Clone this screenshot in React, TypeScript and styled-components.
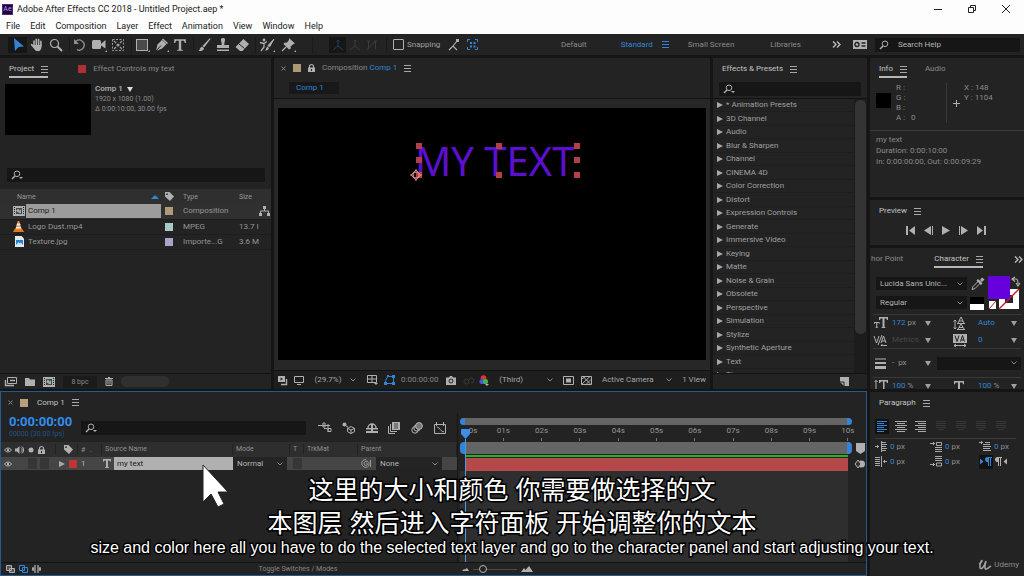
import React from "react";
import styled, { createGlobalStyle, css } from "styled-components";

const c = {
  bg: "#232323",
  gap: "#151515",
  field: "#161616",
  line: "#121212",
  text: "#b4b4b4",
  dim: "#8a8a8a",
  faint: "#484848",
  blue: "#3285d6",
  icon: "#b0b0b0",
};

const Global = createGlobalStyle`
  *, *::before, *::after { box-sizing: border-box; }
  body { margin: 0; background: ${c.gap}; }
  button, input, select { font: inherit; color: inherit; border: 0; padding: 0; margin: 0; background: none; border-radius: 0; }
  select { appearance: none; }
  p { margin: 0; }
`;

const App = styled.div`
  position: relative;
  display: flex;
  flex-direction: column;
  min-height: 100vh;
  overflow: hidden;
  background: ${c.gap};
  color: ${c.text};
  font: 8px/10px Roboto, "Liberation Sans", sans-serif;
`;

/* ---------- window chrome ---------- */
const TitleBar = styled.header`
  display: flex;
  align-items: center;
  height: 18px;
  padding: 0 14px 0 2px;
  gap: 4px;
  background: #fdfdfd;
  color: #222;
  font-size: 9px;
`;
const AppBadge = styled.span`
  width: 11px;
  height: 11px;
  background: #1f0040;
  border: 1px solid #4b2a78;
  color: #b79be8;
  font-size: 7px;
  line-height: 9px;
  text-align: center;
`;
const WindowButtons = styled.div`
  display: flex;
  gap: 26px;
  margin-left: auto;
`;
const MenuBar = styled.nav`
  display: flex;
  align-items: center;
  height: 16px;
  padding: 0 6px;
  gap: 10px;
  background: #fdfdfd;
  color: #222;
  font-size: 9px;
`;
const PlainButton = styled.button`
  display: inline-flex;
  align-items: center;
  justify-content: center;
  white-space: nowrap;
`;

const Svg = styled.svg`
  display: block;
  flex: none;
  overflow: visible;
`;

type IconProps = { w?: number; h?: number; color?: string; children: React.ReactNode };
const Icon = ({ w = 12, h = 12, color = c.icon, children }: IconProps) => (
  <Svg width={w} height={h} viewBox={`0 0 ${w} ${h}`} fill="none" stroke={color} color={color} aria-hidden="true">
    {children}
  </Svg>
);
const F = { fill: "currentColor", stroke: "none" };

/* ---------- toolbar ---------- */
const Toolbar = styled.div`
  display: flex;
  align-items: center;
  height: 21px;
  padding: 0 4px 0 8px;
  background: ${c.bg};
`;
const ToolGroup = styled.div`
  display: flex;
  width: 62px;
  border-right: 1px solid #1a1a1a;
`;
const Tool = styled.button<{ $on?: boolean; $w?: number }>`
  display: flex;
  align-items: center;
  justify-content: center;
  width: ${(p) => p.$w ?? 19}px;
  height: 16px;
  background: ${(p) => (p.$on ? "#161616" : "none")};
`;
const AxisTools = styled.div`
  display: flex;
  align-items: center;
  margin-left: 13px;
  padding: 0 5px 0 16px;
  border-left: 1px solid #1a1a1a;
  border-right: 1px solid #1a1a1a;
`;
const Snap = styled.label`
  display: flex;
  align-items: center;
  gap: 3px;
  margin: 0 8px 0 6px;
  color: #a0a0a0;
`;
const SnapBox = styled.input`
  appearance: none;
  width: 11px;
  height: 11px;
  border: 1px solid ${c.icon};
  border-radius: 1px;
`;
const SnapIcons = styled.div`
  display: flex;
  align-items: center;
  gap: 7px;
`;
const Workspaces = styled.div`
  display: flex;
  align-items: center;
  margin-left: auto;
  color: ${c.dim};
`;
const Space = styled.button<{ $gap: number; $on?: boolean }>`
  margin-right: ${(p) => p.$gap}px;
  color: ${(p) => (p.$on ? c.blue : c.dim)};
  white-space: nowrap;
`;
const SearchField = styled.label`
  display: flex;
  align-items: center;
  gap: 7px;
  height: 14px;
  padding: 0 4px;
  background: ${c.field};
  input {
    flex: 1;
    min-width: 0;
    outline: 0;
  }
  input::placeholder {
    color: ${c.text};
    opacity: 1;
  }
`;
const HelpSearch = styled(SearchField)`
  width: 145px;
  margin-left: 8px;
`;

/* ---------- panels ---------- */
const Body = styled.main`
  flex: 1;
  display: grid;
  grid-template-columns: minmax(0, 1fr) 154px;
  gap: 3px;
  padding-top: 3px;
`;
const LeftArea = styled.div`
  display: flex;
  flex-direction: column;
  gap: 2px;
  min-width: 0;
`;
const UpperRow = styled.div`
  flex: 1;
  display: grid;
  grid-template-columns: 271px minmax(0, 1fr) 154px;
  gap: 3px;
`;
const Panel = styled.section`
  display: flex;
  flex-direction: column;
  min-width: 0;
  background: ${c.bg};
`;
const Tabs = styled.div`
  display: flex;
  flex: none;
  align-items: flex-start;
  height: 22px;
  padding: 6px 6px 0 9px;
  white-space: nowrap;
  color: ${c.dim};
`;
const Tab = styled.button<{ $on?: boolean; $line?: boolean }>`
  display: flex;
  align-items: center;
  gap: 7px;
  height: 14px;
  padding-bottom: 2px;
  color: ${(p) => (p.$on ? "#c4c4c4" : c.dim)};
  border-bottom: 2px solid ${(p) => (p.$line ? "#b8b8b8" : "transparent")};
  white-space: nowrap;
`;
const Chip = styled.i<{ $c: string }>`
  display: block;
  flex: none;
  width: 8px;
  height: 8px;
  background: ${(p) => p.$c};
`;
const Blue = styled.span`
  color: ${c.blue};
`;
const MenuIcon = ({ color = "#a8a8a8" }: { color?: string }) => (
  <Icon w={7} h={7} color={color}>
    <path d="M0 .5h7M0 3.5h7M0 6.5h7" />
  </Icon>
);
const Lens = ({ drop = true }: { drop?: boolean }) => (
  <Icon w={12} h={10}>
    <circle cx="6" cy="3.8" r="2.8" />
    <path d="M4 6 1 9" strokeWidth="1.4" />
    {drop && <path d="M8 7h4l-2 2z" {...F} />}
  </Icon>
);
const Chevron = () => (
  <Icon w={6} h={4} color="#8a8a8a">
    <path d="M.5.5 3 3 5.5.5" />
  </Icon>
);
const More = () => (
  <Icon w={9} h={7} color="#c0c0c0">
    <path d="M1 .5l3 3-3 3M5 .5l3 3-3 3" strokeWidth="1.3" />
  </Icon>
);

/* Project */
const ProjectTabs = styled(Tabs)`
  gap: 30px;
`;
const Preview = styled.div`
  display: flex;
  gap: 4px;
  height: 88px;
  padding: 4px 5px 0;
  color: ${c.dim};
  font-size: 7px;
  strong {
    display: flex;
    align-items: center;
    gap: 4px;
    color: ${c.text};
    font-size: 8px;
    font-weight: 500;
  }
`;
const Thumb = styled.div`
  width: 86px;
  height: 51px;
  background: #000;
`;
const ProjectSearch = styled(SearchField)`
  margin: 0 6px 7px 7px;
`;
const FileTable = styled.table`
  width: 100%;
  table-layout: fixed;
  border-collapse: collapse;
  color: #969696;
  th {
    height: 15px;
    padding: 0 0 0 4px;
    background: #2f2f2f;
    font-size: 7px;
    font-weight: 400;
    text-align: left;
  }
  td {
    height: 15px;
    padding: 0;
    white-space: nowrap;
    border-bottom: 1px solid #1d1d1d;
  }
`;
const FileRow = styled.tr<{ $on?: boolean }>`
  background: ${(p) => (p.$on ? "#303030" : "none")};
`;
const FileName = styled.div<{ $on?: boolean }>`
  display: grid;
  grid-template-columns: 13px 1fr;
  align-items: center;
  height: 14px;
  span {
    padding: 2px;
    color: ${(p) => (p.$on ? "#1c1c1c" : "#969696")};
    background: ${(p) => (p.$on ? "#9c9c9c" : "none")};
  }
`;
const HeadCell = styled.div`
  display: flex;
  align-items: center;
  justify-content: space-between;
  padding-right: 2px;
`;
const ChipCell = styled.div`
  padding-left: 4px;
`;
const Indented = styled.div`
  padding-left: 4px;
`;
const FootBar = styled.footer`
  display: flex;
  align-items: center;
  gap: 8px;
  height: 16px;
  margin-top: auto;
  padding: 0 5px;
  border-top: 1px solid ${c.line};
  white-space: nowrap;
`;
const Depth = styled.button`
  width: 34px;
  height: 12px;
  background: #1b1b1b;
  font-size: 7px;
  color: ${c.dim};
`;
const ScrollPill = styled.div`
  width: 48px;
  height: 11px;
  border-radius: 6px;
  background: #303030;
`;

/* Composition */
const CompTabs = styled.div`
  display: flex;
  align-items: center;
  height: 20px;
  padding: 0 7px;
  white-space: nowrap;
  color: ${c.dim};
`;
const CompTitle = styled.span`
  margin: 0 7px;
`;
const TabLead = styled.div`
  display: flex;
  align-items: center;
  gap: 7px;
`;
const Breadcrumb = styled.div`
  height: 21px;
  padding: 4px 15px;
  border-bottom: 1px solid ${c.line};
  button {
    display: block;
    width: 50px;
    height: 12px;
    padding-left: 7px;
    text-align: left;
    background: #181818;
    color: ${c.blue};
  }
`;
const Stage = styled.div`
  flex: 1;
  display: flex;
  padding: 9px 4px 10px;
  background: #272727;
`;
const Canvas = styled.div`
  position: relative;
  flex: 1;
  background: #000;
`;
const TextLayer = styled.div`
  position: absolute;
  left: 32%;
  top: 15%;
  width: 160px;
  height: 30px;
  color: #5c10cf;
  font: 40px/30px "Noto Sans", sans-serif;
  white-space: nowrap;
  svg {
    position: absolute;
    inset: 0;
  }
`;
const ViewerBar = styled(FootBar)`
  height: 19px;
  gap: 0;
  padding: 0 4px;
  justify-content: space-between;
  background: #1e1e1e;
  color: #a5a5a5;
`;
const Faded = styled.span`
  color: #858585;
`;
const SelectBox = styled.label<{ $w?: number; $bg?: string }>`
  display: grid;
  align-items: center;
  width: ${(p) => (p.$w ? `${p.$w}px` : "100%")};
  height: 13px;
  background: ${(p) => p.$bg ?? "none"};
  select,
  svg {
    grid-area: 1 / 1;
  }
  select {
    width: 100%;
    height: 100%;
    padding-left: 4px;
  }
  svg {
    justify-self: end;
    margin-right: 4px;
    pointer-events: none;
  }
`;
const Picker = ({ label, value, ...rest }: { label: string; value: string; $w?: number; $bg?: string }) => (
  <SelectBox {...rest}>
    <select aria-label={label} defaultValue={value}>
      <option>{value}</option>
    </select>
    <Chevron />
  </SelectBox>
);

/* Effects */
const EffectSearch = styled(SearchField)`
  margin: 2px 6px;
`;
const EffectBody = styled.div`
  display: flex;
  height: 275px;
  overflow: hidden;
  border-top: 1px solid ${c.line};
`;
const EffectList = styled.ul`
  flex: 1;
  margin: 0;
  padding: 0;
  list-style: none;
  color: #a0a0a0;
`;
const EffectItem = styled.li`
  display: flex;
  align-items: center;
  gap: 3px;
  height: 13px;
  padding-left: 4px;
  border-bottom: 1px solid #1e1e1e;
  white-space: nowrap;
  &:nth-child(even) {
    height: 14px;
  }
`;
const ScrollTrack = styled.div`
  width: 13px;
  padding: 1px 1px 0;
  background: #1c1c1c;
`;
const ScrollThumb = styled.div`
  height: 234px;
  border-radius: 5px;
  background: #343434;
`;
const NewPreset = styled.div`
  margin-left: auto;
  padding-right: 13px;
`;

/* Right column */
const RightArea = styled.aside`
  display: flex;
  flex-direction: column;
  gap: 3px;
  min-width: 0;
`;
const InfoTabs = styled(Tabs)`
  gap: 18px;
`;
const InfoGrid = styled.div`
  display: grid;
  grid-template-columns: 20px 51px 17px 1fr;
  height: 51px;
  padding: 3px 6px 0;
  color: ${c.dim};
  border-bottom: 1px solid #3a3a3a;
`;
const Swatch = styled.div`
  width: 15px;
  height: 15px;
  margin-top: 10px;
  background: #000;
`;
const Channels = styled.div`
  height: 40px;
  border-right: 1px solid #3a3a3a;
  white-space: pre;
`;
const Plus = styled.div`
  padding: 17px 0 0 6px;
`;
const InfoText = styled.div`
  padding: 3px 6px 0;
  line-height: 11px;
  color: ${c.dim};
  white-space: nowrap;
`;
const InfoPanel = styled(Panel)`
  height: 139px;
`;
const PreviewPanel = styled(Panel)`
  height: 45px;
`;
const Transport = styled.div`
  display: flex;
  justify-content: center;
  gap: 9px;
  padding: 4px 2px 0 0;
`;
const CharPanel = styled(Panel)`
  height: 141px;
  overflow: hidden;
`;
const CharTabs = styled(Tabs)`
  justify-content: space-between;
  padding-left: 1px;
  padding-right: 1px;
`;
const CharTop = styled.div`
  display: grid;
  flex: none;
  grid-template-columns: 91px 1fr;
  gap: 3px;
  height: 44px;
  padding: 7px 3px 0 6px;
`;
const FontPickers = styled.div`
  display: grid;
  grid-auto-rows: 13px;
  gap: 6px;
`;
const CharRow = styled.div<{ $h?: number; $line?: boolean }>`
  display: grid;
  grid-template-columns: 18px 33px 28px 25px 33px 10px;
  flex: none;
  align-items: center;
  height: ${(p) => p.$h ?? 17}px;
  margin: 0 3px;
  padding-left: 1px;
  white-space: nowrap;
  border-top: 1px solid ${(p) => (p.$line ? "#383838" : "transparent")};
`;
const StrokeRow = styled(CharRow)`
  grid-template-columns: 18px 33px 12px 1fr;
`;
const Val = styled.span<{ $off?: boolean }>`
  color: ${(p) => (p.$off ? c.faint : "#909090")};
`;
const ParaPanel = styled(Panel)`
  flex: 1;
`;
const AlignRow = styled.div`
  display: flex;
  align-items: center;
  gap: 5px;
  height: 25px;
  margin: 0 8px 0 5px;
  border-bottom: 1px solid #3a3a3a;
`;
const AlignButton = styled.button<{ $on?: boolean }>`
  display: flex;
  align-items: center;
  justify-content: center;
  width: 14px;
  height: 15px;
  background: ${(p) => (p.$on ? "#121212" : "none")};
`;
const Justify = styled.div`
  display: flex;
  gap: 6px;
  padding-left: 2px;
`;
const IndentGrid = styled.div`
  display: grid;
  grid-template-columns: 15px 40px 15px 34px 15px 1fr;
  grid-auto-rows: 15px;
  align-items: center;
  padding: 0 4px 0 5px;
`;
const DirButton = styled.button<{ $on?: boolean }>`
  display: grid;
  place-items: center;
  width: 14px;
  height: 14px;
  background: ${(p) => (p.$on ? "#121212" : "none")};
`;
const Brand = styled.div`
  display: flex;
  align-items: center;
  justify-content: flex-end;
  gap: 3px;
  margin-top: auto;
  padding: 0 5px 6px 0;
  color: #8c8c8c;
`;

/* Timeline */
const Timeline = styled(Panel)`
  position: relative;
  height: 185px;
  border: 1px solid #27588f;
`;
const TimeTabs = styled.div`
  display: flex;
  align-items: center;
  height: 21px;
  padding: 0 7px;
`;
const TimeTitle = styled.span`
  margin-left: 2px;
  color: #c4c4c4;
`;
const TimeBody = styled.div`
  flex: 1;
  display: flex;
`;
const LayerSide = styled.div`
  width: 456px;
  display: flex;
  flex-direction: column;
`;
const TimeTools = styled.div`
  display: flex;
  align-items: center;
  height: 29px;
  padding: 0 10px 0 8px;
`;
const Timecode = styled.div`
  width: 72px;
  padding-bottom: 2px;
  color: #2f8eee;
  font-size: 13px;
  font-weight: 700;
  line-height: 14px;
  small {
    display: block;
    color: #1f5286;
    font-size: 7px;
    font-weight: 400;
    line-height: 10px;
  }
`;
const LayerSearch = styled(SearchField)`
  width: 225px;
  margin-right: 12px;
`;
const TimeIcons = styled.div`
  flex: 1;
  display: flex;
  align-items: center;
  justify-content: space-between;
`;
const layerGrid = css`
  display: grid;
  grid-template-columns: 55px 22px 24px 131px 57px 14px 54px 1fr;
  align-items: center;
`;
const LayerHead = styled.div`
  ${layerGrid}
  height: 15px;
  background: #2e2e2e;
  color: #8e8e8e;
  font-size: 7px;
  > * {
    height: 11px;
    padding-left: 3px;
    border-right: 1px solid #222;
    white-space: nowrap;
  }
`;
const LayerRow = styled.div`
  ${layerGrid}
  height: 13px;
  background: #454545;
`;
const Cells = styled.div<{ $gap?: number; $center?: boolean }>`
  display: flex;
  align-items: center;
  justify-content: ${(p) => (p.$center ? "center" : "flex-start")};
  gap: ${(p) => p.$gap ?? 3}px;
  padding-left: 3px;
`;
const DarkCell = styled.i`
  width: 9px;
  height: 11px;
  background: #363636;
`;
const SpeakerGap = styled.i`
  width: 10px;
`;
const LayerName = styled.div`
  display: grid;
  grid-template-columns: 12px 1fr;
  align-items: center;
  span {
    height: 13px;
    padding-left: 3px;
    line-height: 13px;
    background: #b0b0b0;
    color: #1c1c1c;
  }
`;
const TrackSide = styled.div`
  flex: 1;
  display: flex;
  flex-direction: column;
`;
const TrackBody = styled.div`
  flex: 1;
  display: grid;
  grid-template-columns: 1fr 18px;
  padding-left: 7px;
  border-left: 1px solid #161616;
`;
const Track = styled.div`
  position: relative;
  display: flex;
  flex-direction: column;
`;
const RangeBar = styled.div<{ $h: number; $top: number }>`
  height: ${(p) => p.$h}px;
  margin: ${(p) => p.$top}px -4px 0 -5px;
  background: #656565;
  border: solid #3285d6;
  border-width: 0 5px;
  border-radius: 4px;
`;
const Ruler = styled.div`
  display: grid;
  grid-template-columns: repeat(11, minmax(0, 1fr));
  height: 16px;
  margin: 0 -19px;
  color: #969696;
  line-height: 12px;
  text-align: center;
  span::after {
    content: "";
    display: block;
    width: 1px;
    height: 3px;
    margin: 1px auto 0;
    background: #777;
  }
  span:first-child {
    padding-left: 16px;
  }
  span:first-child::after {
    background: none;
  }
`;
const Cached = styled.div`
  height: 2px;
  margin: 1px 0;
  background: #24b324;
`;
const LayerBar = styled.div`
  height: 13px;
  background: #b5484b;
`;
const TrackFill = styled.div`
  flex: 1;
  margin-left: -5px;
  background: #2e2e2e;
`;
const Playhead = styled.div`
  position: absolute;
  left: -5px;
  top: 16px;
  bottom: 0;
  width: 11px;
  display: flex;
  flex-direction: column;
  align-items: center;
  i {
    flex: 1;
    width: 1px;
    background: #4d9be6;
  }
`;
const TrackMarks = styled.div`
  display: flex;
  flex-direction: column;
  align-items: flex-end;
  gap: 5px;
  padding: 30px 1px 0 0;
`;
const TimeFoot = styled(FootBar)`
  height: 13px;
  gap: 4px;
`;
const ToggleModes = styled.button`
  width: 136px;
  margin-left: auto;
  margin-right: 86px;
  color: #858585;
  font-size: 7px;
`;
const Zoom = styled.input`
  appearance: none;
  width: 44px;
  height: 8px;
  &::-webkit-slider-runnable-track {
    height: 1px;
    background: #4c4c4c;
  }
  &::-webkit-slider-thumb {
    appearance: none;
    width: 8px;
    height: 8px;
    margin-top: -4px;
    border: 1px solid #b4b4b4;
    border-radius: 50%;
    background: #232323;
  }
`;

/* Overlays */
const Pointer = styled.div`
  position: absolute;
  left: 201px;
  top: 72px;
`;
const Subtitles = styled.div`
  position: absolute;
  left: 0;
  right: 0;
  bottom: 20px;
  color: #fff;
  text-align: center;
  white-space: nowrap;
  pointer-events: none;
  paint-order: stroke fill;
  -webkit-text-stroke: 3px #000;
`;
const Chinese = styled.p`
  font: 25px/33px "Liberation Sans", "Noto Sans CJK SC", sans-serif;
`;
const English = styled.p`
  font: 16px/16px "Liberation Sans", sans-serif;
`;

/* ---------- shared drawings ---------- */
const Tri = ({ color = "#a8a8a8" }: { color?: string }) => (
  <Icon w={6} h={6} color={color}>
    <path d="M0 0l6 3-6 3z" {...F} />
  </Icon>
);
const Down = ({ color = "#a0a0a0" }: { color?: string }) => (
  <Icon w={6} h={5} color={color}>
    <path d="M0 0h6L3 5z" {...F} />
  </Icon>
);
const Cross = () => (
  <Icon w={5} h={5} color="#888">
    <path d="M.5.5l4 4M4.5.5l-4 4" />
  </Icon>
);
const Tag = () => (
  <Icon w={9} h={9}>
    <path d="M0 0h4.5L9 4.5 5 9 0 4.5zM2 1.2a.9.9 0 1 0 .1 1.8A.9.9 0 0 0 2 1.2z" fillRule="evenodd" {...F} />
  </Icon>
);
const Eye = () => (
  <Icon w={8} h={6}>
    <path d="M.5 3C2.3.4 5.7.4 7.5 3 5.7 5.6 2.3 5.6.5 3z" />
    <circle cx="4" cy="3" r="1.2" {...F} />
  </Icon>
);
const Lock = () => (
  <Icon w={7} h={8}>
    <path d="M0 3.5h7V8H0z" {...F} />
    <path d="M1.5 4V2.5a2 2 0 0 1 4 0V4" strokeWidth="1.2" />
    <path d="M3.5 5v2" stroke="#222" />
  </Icon>
);
const CompIcon = () => (
  <Icon w={12} h={10}>
    <path d="M0 0h12v10H0z" {...F} />
    <path d="M1.5 1v8M10.5 1v8" stroke="#222" strokeDasharray="1 1" />
    <path d="M3 2h6v6H3z" fill="#3c4a55" stroke="none" />
    <circle cx="5" cy="4.4" r="1.5" fill="#c9b070" stroke="none" />
    <path d="M5 7l3-4v4z" fill="#8fb6cc" stroke="none" />
  </Icon>
);
const Cone = () => (
  <Icon w={11} h={11}>
    <path d="M2 7.5h7l2 3.5H0z" fill="#e07a1c" stroke="none" />
    <path d="M4.7 0h1.6l2.2 8.2c-1.4.8-4.6.8-6 0z" fill="#ea8a2c" stroke="none" />
    <path d="M4 2.6h3l.5 1.8h-4zM3.1 5.8h4.8l.4 1.6H2.7z" fill="#eee" stroke="none" />
  </Icon>
);
const Jpg = () => (
  <Icon w={11} h={11}>
    <path d="M2 0h6.5L11 2.5V11H2z" fill="#dfe9f2" stroke="none" />
    <path d="M3 4h7v5H3z" fill="#2b7fc4" stroke="none" />
    <path d="M3 9l2.5-3L7 7.6l1-1L10 9z" fill="#cfe6f7" stroke="none" />
  </Icon>
);
const linePaths = {
  l: "M1 .5h10M1 2.5h7M1 4.5h10M1 6.5h7M1 8.5h10M1 10.5h7",
  c: "M0 .5h12M2 2.5h8M0 4.5h12M2 6.5h8M0 8.5h12M2 10.5h8",
  r: "M1 .5h11M4 2.5h8M1 4.5h11M4 6.5h8M1 8.5h11M4 10.5h8",
  j: "M1 .5h10M1 2.5h10M1 4.5h10M1 6.5h10M3 8.5h6",
};
const Lines = ({ kind, color }: { kind: keyof typeof linePaths; color: string }) => (
  <Icon w={12} h={11} color={color}>
    <path d={linePaths[kind]} />
  </Icon>
);
const BigT = ({ size = 12 }: { size?: number }) => (
  <Svg width={size} height={size} viewBox="0 0 12 12" color={c.icon} aria-hidden="true">
    <path d="M1 1h10v3.2h-.9L9.4 2.4H7v7.4l1.5.5v.7h-5v-.7L5 9.8V2.4H2.6l-.7 1.8H1z" {...F} />
  </Svg>
);
const indentPaths = [
  "M0 5.5h4M2.5 4v3M6.5 0v11M7 1.5h4M7 3.5h5M7 5.5h4M7 7.5h5M7 9.5h4",
  "M0 2.5h5M3.5 1v3M6.5 1.5h5v3h-5zM5 6.5h7M5 8.5h7M5 10.5h7",
  "M0 1.5h4M2.5 0v3M6 1.5h5M4 3.5h7M4 5.5h8M4 7.5h7M4 9.5h8",
  "M0 1.5h5M0 3.5h5M0 5.5h5M0 7.5h5M0 9.5h5M6.5 0v11M8 5.5h4M9.5 4v3",
  "M5 .5h7M5 2.5h7M5 4.5h7M0 8.5h5M3.5 7v3M6.5 7h5v3h-5z",
];
const Indent = ({ v }: { v: number }) => (
  <Icon w={12} h={11} color="#a8a8a8">
    <path d={indentPaths[v]} />
  </Icon>
);

const effects = [
  "* Animation Presets", "3D Channel", "Audio", "Blur & Sharpen", "Channel", "CINEMA 4D", "Color Correction",
  "Distort", "Expression Controls", "Generate", "Immersive Video", "Keying", "Matte", "Noise & Grain", "Obsolete",
  "Perspective", "Simulation", "Stylize", "Synthetic Aperture", "Text", "Time",
];
const menus = ["File", "Edit", "Composition", "Layer", "Effect", "Animation", "View", "Window", "Help"];
const files = [
  { name: "Comp 1", type: "Composition", size: "", chip: "#b09a78", icon: <CompIcon />, on: true },
  { name: "Logo Dust.mp4", type: "MPEG", size: "13.7 I", chip: "#a9c9c4", icon: <Cone /> },
  { name: "Texture.jpg", type: "Importe...G", size: "3.6 M", chip: "#aaa3cc", icon: <Jpg /> },
];
const seconds = ["0s", "01s", "02s", "03s", "04s", "05s", "06s", "07s", "08s", "09s", "10s"];

const corner = <path d="M16 12v2h-2z" {...F} />;

function Tools() {
  return (
    <>
      <ToolGroup>
        <Tool $on aria-label="Selection">
          <Icon w={16} h={14} color={c.blue}><path d="M4 0l10 8.4-5.4.6L5 13z" {...F} /></Icon>
        </Tool>
        <Tool aria-label="Hand">
          <Icon w={16} h={14}>
            <path d="M5 8V3M7.3 7V1.2M9.6 7V1.6M11.9 8V3.4M2.6 6.6L5.6 10" strokeWidth="1.6" strokeLinecap="round" />
            <path d="M4.2 7h8.5l-.6 4-1.6 2H7L4.2 9.8z" {...F} />
          </Icon>
        </Tool>
        <Tool aria-label="Zoom">
          <Icon w={16} h={14}><circle cx="6.5" cy="5.5" r="4" strokeWidth="1.2" /><path d="M9.5 8.5l4.5 4.5" strokeWidth="2" /></Icon>
        </Tool>
      </ToolGroup>
      <ToolGroup>
        <Tool aria-label="Rotation">
          <Icon w={16} h={14} color="#909090"><path d="M4 3.2A5 5 0 1 1 5 11.6" strokeWidth="1.4" /><path d="M2 1v5h5z" {...F} /></Icon>
        </Tool>
        <Tool aria-label="Camera">
          <Icon w={16} h={14}><rect x="1" y="2" width="9" height="9" rx="1.5" {...F} /><path d="M10 6l4.5-4v8.5L10 7.5z" {...F} />{corner}</Icon>
        </Tool>
        <Tool aria-label="Pan Behind">
          <Icon w={16} h={14} color="#9a9a9a">
            <rect x="2.5" y="1.5" width="11" height="11" strokeDasharray="2 1.5" />
            <circle cx="8" cy="7" r="1.6" {...F} /><path d="M4 3l2 2M12 3l-2 2M4 11l2-2M12 11l-2-2" strokeWidth="1.3" />
          </Icon>
        </Tool>
      </ToolGroup>
      <ToolGroup>
        <Tool aria-label="Rectangle">
          <Icon w={16} h={14}><rect x="2.5" y="1.5" width="11" height="11" fill="#4a4a4a" />{corner}</Icon>
        </Tool>
        <Tool aria-label="Pen">
          <Icon w={16} h={14}><path d="M3 13l1.5-6.5L9 2l4.5 4-4.4 4.6z" {...F} /><path d="M9.5 1l5 4.5" strokeWidth="1.6" /><path d="M3 13l5-5.5" stroke="#232323" />{corner}</Icon>
        </Tool>
        <Tool aria-label="Type"><BigT size={14} /></Tool>
      </ToolGroup>
      <ToolGroup>
        <Tool aria-label="Brush">
          <Icon w={16} h={14}><path d="M14 0L6.5 8l1.6 1.6L14.5 1z" {...F} /><path d="M6 8.4l2 2c-.6 2.2-2.6 2.8-5.5 2.6C4 12 3.8 9.4 6 8.4z" {...F} /></Icon>
        </Tool>
        <Tool aria-label="Clone Stamp">
          <Icon w={16} h={14}><path d="M8 0c2 0 2.6 1.5 1.8 3L9.2 7H14v3H2V7h4.8L6.2 3C5.4 1.5 6 0 8 0zM2 11.5h12V13H2z" {...F} /></Icon>
        </Tool>
        <Tool aria-label="Eraser">
          <Icon w={16} h={14}><path d="M9.5 1L15 6l-6.5 7H6L1.5 9z" {...F} /><path d="M4.5 5.5l6 5" stroke="#232323" /></Icon>
        </Tool>
      </ToolGroup>
      <Tool $w={21} aria-label="Roto Brush">
        <Icon w={16} h={14}><path d="M15 1L9 7.5 10.5 9z" {...F} stroke={c.icon} /><path d="M8.5 8.5L10 10c-.6 2-2 2.5-4 2.5 1.2-.8.8-3 2.5-4z" {...F} /><circle cx="5" cy="2" r="1.4" {...F} /><path d="M1 4.5l4 1 3-2M5 5v4l-3 4" strokeWidth="1.3" />{corner}</Icon>
      </Tool>
      <Tool $w={22} aria-label="Puppet Pin">
        <Icon w={16} h={14}><path d="M9 0l6 5.5-1.5.5-3 2.5.3 2L9 11.5 3.5 6l1.2-1.4 2 .2L9 2z" {...F} /><path d="M6 9l-4 4" strokeWidth="1.3" />{corner}</Icon>
      </Tool>
      <AxisTools>
        <Tool $w={17} $on aria-label="Local Axis"><Icon w={12} h={12} color="#25405c"><path d="M6 1v6l-5 4M6 7l5 4M4.5 2.5L6 1l1.5 1.5" /></Icon></Tool>
        <Tool $w={17} aria-label="World Axis"><Icon w={12} h={12} color="#3c3c3c"><path d="M6 1v6l-5 4M6 7l5 4M4.5 2.5L6 1l1.5 1.5" /></Icon></Tool>
        <Tool $w={18} aria-label="View Axis"><Icon w={12} h={12} color="#3c3c3c"><path d="M2.5 2v7l7-7v8M1 2h3M8 2h3M2.5 9l-1 2" /></Icon></Tool>
      </AxisTools>
    </>
  );
}

function ProjectPanel() {
  return (
    <Panel>
      <ProjectTabs>
        <Tab $on $line>Project <MenuIcon /></Tab>
        <Tab><Chip $c="#b03038" />Effect Controls my text</Tab>
      </ProjectTabs>
      <Preview>
        <Thumb />
        <div>
          <strong>Comp 1 <Down color="#ddd" /></strong>
          <div>1920 x 1080 (1.00)</div>
          <div>Δ 0:00:10:00, 30.00 fps</div>
        </div>
      </Preview>
      <ProjectSearch><Lens /><input aria-label="Search project" /></ProjectSearch>
      <FileTable>
        <colgroup><col width="13" /><col width="148" /><col width="18" /><col width="56" /><col width="24" /><col /></colgroup>
        <thead>
          <tr>
            <th />
            <th><HeadCell>Name<Icon w={8} h={4} color={c.blue}><path d="M0 4l4-4 4 4z" {...F} /></Icon></HeadCell></th>
            <th><Tag /></th><th>Type</th><th>Size</th><th />
          </tr>
        </thead>
        <tbody>
          {files.map((f) => (
            <FileRow key={f.name} $on={f.on}>
              <td />
              <td><FileName $on={f.on}>{f.icon}<span>{f.name}</span></FileName></td>
              <td><ChipCell><Chip $c={f.chip} /></ChipCell></td>
              <td><Indented>{f.type}</Indented></td>
              <td><Indented>{f.size}</Indented></td>
              <td>{f.on && <Icon w={11} h={10}><path d="M4 0h3v3H4zM0 7h3v3H0zM8 7h3v3H8z" {...F} /><path d="M5.5 3v2M1.5 7V5h8v2" /></Icon>}</td>
            </FileRow>
          ))}
        </tbody>
      </FileTable>
      <FootBar>
        <Icon w={12} h={9}><path d="M2.5.5h9v6h-9z" /><path d="M.5 3v5.5H9M5 3.5h5" strokeWidth="1.4" /></Icon>
        <Icon w={10} h={8}><path d="M0 0h4l1 1.5h5V8H0z" {...F} /></Icon>
        <CompIcon />
        <Depth>8 bpc</Depth>
        <Icon w={8} h={9}><path d="M0 1.5h8M3 .5h2M1 3h6v5.5H1zM3 3.5v4M5 3.5v4" /></Icon>
        <ScrollPill />
      </FootBar>
    </Panel>
  );
}

function CompositionPanel() {
  return (
    <Panel>
      <CompTabs>
        <TabLead><Cross /><Chip $c="#ab9a74" /><Lock /></TabLead>
        <CompTitle>Composition <Blue>Comp 1</Blue></CompTitle>
        <MenuIcon />
      </CompTabs>
      <Breadcrumb><button>Comp 1</button></Breadcrumb>
      <Stage>
        <Canvas>
          <TextLayer>
            MY TEXT
            <Svg width="160" height="30" viewBox="0 0 160 30">
              {[4, 84, 162].flatMap((x) =>
                [0, 14, 29].filter((y) => x !== 84 || y !== 14).map((y) => (
                  <rect key={`${x}-${y}`} x={x - 3} y={y - 3} width="6" height="6" fill="#b14145" />
                ))
              )}
              <circle cx="1" cy="29" r="3" fill="none" stroke="#d08080" />
              <path d="M1 23v4M1 31v4M-5 29h4M3 29h4M-4 29l5-5 5 5-5 5z" fill="none" stroke="#d08080" />
            </Svg>
          </TextLayer>
        </Canvas>
      </Stage>
      <ViewerBar>
        <Icon w={10} h={9}><path d="M0 0h7v6H0z" {...F} /><path d="M8.5 3v5.5H3" strokeWidth="1.4" /><path d="M2.5 1.5v3L5 3z" fill="#222" stroke="none" /></Icon>
        <Icon w={10} h={9}><path d="M.5.5h9v6h-9zM3 8.5h4" /></Icon>
        <Picker label="Magnification" value="(29.7%)" $w={50} />
        <Icon w={11} h={10}><path d="M.5.5h9v7h-9zM5 0v8M0 4h10" /><path d="M7 8h4l-2 2z" {...F} /></Icon>
        <Icon w={11} h={10} color={c.blue}><path d="M1.5 8.5c0-4 1-6 3-7h5v7z" /><path d="M0 7h3v3H0zM8 7h3v3H8zM8 0h3v3H8zM3 0h2v2H3z" {...F} /></Icon>
        <PlainButton><Faded>0:00:00:00</Faded></PlainButton>
        <Icon w={12} h={9}><path d="M1 1.5h3L5 0h2l1 1.5h3V9H1z" {...F} /><circle cx="6" cy="5" r="2" stroke="#222" /></Icon>
        <Icon w={10} h={9} color="#3a3a3a"><circle cx="3.5" cy="5.5" r="2.5" /><path d="M6 4a2.5 2.5 0 1 1 2 3" /></Icon>
        <Icon w={10} h={11}><circle cx="4.5" cy="3" r="2.8" fill="#d33" stroke="none" /><circle cx="3" cy="6.5" r="2.6" fill="#3a5be0" stroke="none" /><circle cx="6.5" cy="6.5" r="2.6" fill="#4ab04a" stroke="none" /><path d="M6 9h4l-2 2z" {...F} /></Icon>
        <Picker label="Resolution" value="(Third)" $w={62} />
        <Icon w={11} h={9}><path d="M.5.5h10v8H.5z" /><path d="M3 2.5h5v4H3z" {...F} /></Icon>
        <Icon w={11} h={9}><path d="M.5.5h10v8H.5zM1 3l3-2.5M1 8L9 .5M5 8.5l5-5M2 .5l8 8" /></Icon>
        <Picker label="View" value="Active Camera" $w={78} />
        <PlainButton>1 View</PlainButton>
      </ViewerBar>
    </Panel>
  );
}

function EffectsPanel() {
  return (
    <Panel>
      <Tabs><Tab $on>Effects &amp; Presets <MenuIcon /></Tab></Tabs>
      <EffectSearch><Lens /><input aria-label="Search effects" /></EffectSearch>
      <EffectBody>
        <EffectList>
          {effects.map((e) => <EffectItem key={e}><Tri />{e}</EffectItem>)}
        </EffectList>
        <ScrollTrack><ScrollThumb /></ScrollTrack>
      </EffectBody>
      <FootBar>
        <NewPreset><Icon w={9} h={9}><path d="M0 0h9v9H4L0 5z" {...F} /><path d="M0 5h4v4" stroke="#222" /></Icon></NewPreset>
      </FootBar>
    </Panel>
  );
}

function RightColumn() {
  return (
    <RightArea>
      <InfoPanel>
        <InfoTabs><Tab $on $line>Info <MenuIcon /></Tab><Tab>Audio</Tab></InfoTabs>
        <InfoGrid>
          <Swatch />
          <Channels>{"R :\nG :\nB :\nA :   0"}</Channels>
          <Plus><Icon w={7} h={7}><path d="M3.5 0v7M0 3.5h7" /></Icon></Plus>
          <div>X : 148<br />Y : 1104</div>
        </InfoGrid>
        <InfoText>my text<br />Duration: 0:00:10:00<br />In: 0:00:00:00, Out: 0:00:09:29</InfoText>
      </InfoPanel>
      <PreviewPanel>
        <Tabs><Tab $on>Preview <MenuIcon /></Tab></Tabs>
        <Transport>
          <PlainButton aria-label="First frame"><Icon w={9} h={9}><path d="M1 0v9" strokeWidth="2" /><path d="M9 0v9L3 4.5z" {...F} /></Icon></PlainButton>
          <PlainButton aria-label="Previous frame"><Icon w={9} h={9}><path d="M8.5 0v9" /><path d="M7 0v9L0 4.5z" {...F} /></Icon></PlainButton>
          <PlainButton aria-label="Play"><Icon w={8} h={9}><path d="M0 0l8 4.5L0 9z" {...F} /></Icon></PlainButton>
          <PlainButton aria-label="Next frame"><Icon w={9} h={9}><path d="M.5 0v9" /><path d="M2 0v9l7-4.5z" {...F} /></Icon></PlainButton>
          <PlainButton aria-label="Last frame"><Icon w={9} h={9}><path d="M8 0v9" strokeWidth="2" /><path d="M0 0v9l6-4.5z" {...F} /></Icon></PlainButton>
        </Transport>
      </PreviewPanel>
      <CharPanel>
        <CharTabs>
          <Tab>hor Point</Tab>
          <Tab $on $line>Character <MenuIcon /></Tab>
          <Tab aria-label="More tabs"><More /></Tab>
        </CharTabs>
        <CharTop>
          <FontPickers>
            <Picker label="Font family" value="Lucida Sans Unic..." $bg={c.field} />
            <Picker label="Font style" value="Regular" $bg={c.field} />
          </FontPickers>
          <Icon w={52} h={34}>
            <path d="M2 12.5l1-3 6-6 2 2-6 6z" /><path d="M8 2l4.5 4.5L11 8 6.5 3.5zM10 3l2-2.5 2.5 2L12 5z" {...F} />
            <path d="M0 20h14v7H0z" fill="#000" stroke="none" /><path d="M0 27h14v6H0z" fill="#fff" stroke="none" />
            <path d="M29 12h20v20H29zM35 18v8h8v-8z" fill="#fff" fillRule="evenodd" stroke="none" />
            <path d="M29 32l20-20" stroke="#c22030" strokeWidth="1.5" />
            <path d="M18-1h22v23H18z" fill="#6600dc" stroke="none" />
            <path d="M19 24h7v8h-7z" fill="#fff" stroke="none" /><path d="M19 32l7-8" stroke="#c22030" />
            <path d="M43 2h3c2 0 2 2 2 5M45 0l-3 2 3 2.5M46 6l2 3 2-3" strokeWidth="1.2" />
          </Icon>
        </CharTop>
        <CharRow $line>
          <Icon w={14} h={12}><path d="M5 0h9v3h-1l-.5-1.5h-2V10l1 .5v.5h-4v-.5l1-.5V1.5h-2L6 3H5zM0 5h5.5v2H5l-.5-1H3.3v4.2l.7.3v.5H1.5v-.5l.7-.3V6H1L.6 7H0z" {...F} /></Icon>
          <Val><Blue>172</Blue> px</Val><Down />
          <Icon w={13} h={13}><path d="M2 3v9M.5 4.5L2 3l1.5 1.5M.5 10.5L2 12l1.5-1.5M5 6l3-6 3 6M6 4h4M5 12l3-5 3 5M6 10.5h4M4 6.5h8M4 12.5h8" /></Icon>
          <Val><Blue>Auto</Blue></Val><Down />
        </CharRow>
        <CharRow>
          <Icon w={13} h={11}><path d="M0 1l2.5 7L5 1M4 10L8 0M7 8l2.5-7L12 8M8 6h3M7 10.5h6M8.5 9L7 10.5" /></Icon>
          <Val $off>Metrics</Val><Down />
          <Icon w={14} h={13}><path d="M0 0h14v9H0z" {...F} /><path d="M2 1.5l2 6 2-6M7.5 7.5l2-6 2 6M8 6h3" stroke="#222" /><path d="M1 11.5h12M3 10l-2 1.5L3 13M11 10l2 1.5L11 13" /></Icon>
          <Val><Blue>0</Blue></Val><Down />
        </CharRow>
        <StrokeRow $h={29} $line>
          <Icon w={12} h={11}><path d="M1 1h11" /><path d="M1 5h11" strokeWidth="2" /><path d="M1 9.5h11" strokeWidth="3" /></Icon>
          <Val>- &nbsp;px</Val><Down />
          <Picker label="Stroke order" value="" $bg={c.field} />
        </StrokeRow>
        <CharRow $line>
          <Icon w={14} h={12}><path d="M5 0h9v3h-1l-.5-1.5h-2V10H9V1.5H7L6 3H5z" {...F} /><path d="M2 0v10M.5 2L2 .5 3.5 2" /></Icon>
          <Val><Blue>100</Blue> %</Val><Down />
          <BigT size={12} />
          <Val><Blue>100</Blue> %</Val><Down />
        </CharRow>
      </CharPanel>
      <ParaPanel>
        <Tabs><Tab $on>Paragraph <MenuIcon /></Tab></Tabs>
        <AlignRow>
          <AlignButton $on aria-label="Left"><Lines kind="l" color={c.blue} /></AlignButton>
          <AlignButton aria-label="Center"><Lines kind="c" color="#a8a8a8" /></AlignButton>
          <AlignButton aria-label="Right"><Lines kind="r" color="#a8a8a8" /></AlignButton>
          <Justify>
            {["Justify left", "Justify center", "Justify right", "Justify all"].map((n) => (
              <AlignButton key={n} aria-label={n}><Lines kind="j" color="#363636" /></AlignButton>
            ))}
          </Justify>
        </AlignRow>
        <IndentGrid>
          <Indent v={0} /><Val><Blue>0</Blue> px</Val>
          <Indent v={1} /><Val><Blue>0</Blue> px</Val>
          <Indent v={2} /><Val><Blue>0</Blue> px</Val>
          <Indent v={3} /><Val><Blue>0</Blue> px</Val>
          <Indent v={4} /><Val><Blue>0</Blue> px</Val>
          <DirButton $on aria-label="Left to right">
            <Icon w={12} h={9} color={c.blue}><path d="M0 1.5v6l3.5-3zM5 2.5A2.5 2.5 0 0 1 7.5 0H12v1H8v4A2.5 2.5 0 0 1 5 2.5z" {...F} /><path d="M8.5 0v9M10.5 0v9" /></Icon>
          </DirButton>
          <DirButton aria-label="Right to left">
            <Icon w={12} h={9}><path d="M12 1.5v6l-3.5-3zM0 2.5A2.5 2.5 0 0 1 2.5 0H7v1H3v4A2.5 2.5 0 0 1 0 2.5z" {...F} /><path d="M3.5 0v9M5.5 0v9" /></Icon>
          </DirButton>
        </IndentGrid>
        <Brand>
          <Icon w={13} h={10} color="#a0a0a0"><path d="M1 4C3 3 4.5 1 4 .5 3 .5 1.5 5 2 7.5c.5 2.5 4 .5 6-6.5-1.5 5-1.5 8 0 8 1.5 0 3-2 5-3" strokeWidth="1.6" /></Icon>
          <span>Udemy</span>
        </Brand>
      </ParaPanel>
    </RightArea>
  );
}

function TimelinePanel() {
  return (
    <Timeline>
      <TimeTabs>
        <TabLead><Cross /><Chip $c="#b5a07a" /><TimeTitle>Comp 1</TimeTitle><MenuIcon /></TabLead>
      </TimeTabs>
      <TimeBody>
        <LayerSide>
          <TimeTools>
            <Timecode>0:00:00:00<small>00000 (30.00 fps)</small></Timecode>
            <LayerSearch><Lens /><input aria-label="Search layers" /></LayerSearch>
            <TimeIcons>
              <Icon w={13} h={10}><path d="M0 2.5h12M5 0h2v4H5zM10 1v8M6 5.5h3M10 5.5h3v3h-3z" /></Icon>
              <Icon w={13} h={12}><circle cx="2.5" cy="2.5" r="2" {...F} /><path d="M4 4l2 1M9 4.5l3.5 1.8v3.4L9 11.5 5.5 9.7V6.3zM5.5 6.3L9 8l3.5-1.7M9 8v3.5" /></Icon>
              <Icon w={12} h={11}><path d="M2 6a4 4 0 0 1 8 0" strokeWidth="1.4" /><path d="M0 6h5v1.5H0zM7 6h5v1.5H7zM0 9h12v2H0zM5 2h2v9H5z" {...F} /></Icon>
              <Icon w={12} h={12}><path d="M4 0h8v8H4z" {...F} /><path d="M2.5 2v7.5H9M.5 4v7.5H7" /><path d="M6 2h4M6 4h4M6 6h4" stroke="#444" /></Icon>
              <Icon w={12} h={12}><circle cx="4" cy="8" r="3.2" /><circle cx="6" cy="6" r="3.2" /><circle cx="8" cy="4" r="3.4" fill="#777" /></Icon>
              <Icon w={13} h={12}><path d="M.5 2.5h11v9H.5zM2.5 0v4M9.5 0v4M3 5c3 0 3.5 5 7 5" /></Icon>
            </TimeIcons>
          </TimeTools>
          <LayerHead>
            <Cells>
              <Eye />
              <Icon w={9} h={8}><path d="M0 2.5h2L4.5 0v8L2 5.5H0z" {...F} /><path d="M6 1.5c1.5 1 1.5 4 0 5M7 .5c2 1.5 2 5.5 0 7" /></Icon>
              <Icon w={8} h={8}><circle cx="4" cy="4" r="2.5" {...F} /></Icon>
              <Lock />
            </Cells>
            <Cells $center><Tag /></Cells>
            <Cells>#<span>&nbsp;.</span></Cells>
            <div>Source Name</div>
            <div>Mode</div>
            <div>T</div>
            <div>TrkMat</div>
            <div>Parent</div>
          </LayerHead>
          <LayerRow>
            <Cells><Eye /><SpeakerGap /><DarkCell /><DarkCell /></Cells>
            <Cells $gap={4}><Tri /><Chip $c="#c13336" /></Cells>
            <Cells>1</Cells>
            <LayerName><Icon w={10} h={9}><path d="M1 0h8v2.5H8l-.5-1H6V8l1 .3V9H3v-.7L4 8V1.5H2.5l-.5 1H1z" {...F} /></Icon><span>my text</span></LayerName>
            <Picker label="Blending mode" value="Normal" $w={54} $bg="#242424" />
            <Cells><DarkCell /></Cells>
            <i />
            <Cells $gap={5}>
              <Icon w={10} h={9}><path d="M5 4.5c1-1 2 .5 1 1.5S3 6 3 4.5 4.5 2 6 2.2 8.5 4 8 6 5.5 8.5 4 8.2.5 6.5.8 4 3 .5 5 .5M9.5 1v7" strokeWidth=".8" /></Icon>
              <Picker label="Parent" value="None" $w={66} $bg="#242424" />
            </Cells>
          </LayerRow>
          <TimeFoot>
            <Icon w={9} h={8}><path d="M.5.5h5v5h-5zM3.5 3.5h5v4h-5z" fill="#555" /></Icon>
            <Icon w={9} h={8} color={c.blue}><path d="M.5.5h5v5h-5zM3.5 2.5h5v5h-5z" /></Icon>
            <Icon w={9} h={8}><path d="M3 0v8M6 0v8M0 4h2M7 4h2M1 2v4M8 2v4" strokeWidth="1.3" /></Icon>
            <ToggleModes>Toggle Switches / Modes</ToggleModes>
          </TimeFoot>
        </LayerSide>
        <TrackSide>
          <TrackBody>
            <Track>
              <RangeBar $h={7} $top={5} />
              <Ruler>{seconds.map((s) => <span key={s}>{s}</span>)}</Ruler>
              <RangeBar $h={12} $top={1} />
              <Cached />
              <LayerBar />
              <TrackFill />
              <Playhead>
                <Icon w={9} h={10} color="#3b8fe4"><path d="M0 0h9v5l-4.5 5L0 5z" {...F} /></Icon>
                <i />
              </Playhead>
            </Track>
            <TrackMarks>
              <Icon w={9} h={11}><path d="M0 0h9v8l-4.5 3L0 8z" {...F} /></Icon>
              <Icon w={11} h={10}><circle cx="7.5" cy="5" r="3.5" {...F} /><path d="M4 1l3 4-3 4-3-4z" fill="#333" /></Icon>
            </TrackMarks>
          </TrackBody>
          <TimeFoot>
            <Icon w={7} h={4}><path d="M0 4l2-2 1 .5L5 1l2 3z" {...F} /></Icon>
            <Zoom type="range" aria-label="Timeline zoom" defaultValue={16} min={0} max={100} />
            <Icon w={12} h={6}><path d="M0 6l3-4 1.5 2L8 0l4 6z" {...F} /></Icon>
          </TimeFoot>
        </TrackSide>
      </TimeBody>
      <Pointer>
        <Icon w={26} h={44}><path d="M1 1v37l8-8 7 13 6-3-6-12h10z" fill="#fff" stroke="#222" /></Icon>
      </Pointer>
    </Timeline>
  );
}

export default function AfterEffects() {
  return (
    <App>
      <Global />
      <TitleBar>
        <AppBadge>Ae</AppBadge>
        Adobe After Effects CC 2018 - Untitled Project.aep *
        <WindowButtons>
          <PlainButton aria-label="Minimize"><Icon w={8} h={8} color="#222"><path d="M0 4.5h8" /></Icon></PlainButton>
          <PlainButton aria-label="Restore"><Icon w={8} h={8} color="#222"><path d="M.5 2.5h5v5h-5zM2.5 2V.5h5v5H6" /></Icon></PlainButton>
          <PlainButton aria-label="Close"><Icon w={8} h={8} color="#222"><path d="M0 0l8 8M8 0L0 8" /></Icon></PlainButton>
        </WindowButtons>
      </TitleBar>
      <MenuBar>{menus.map((m) => <PlainButton key={m}>{m}</PlainButton>)}</MenuBar>
      <Toolbar>
        <Tools />
        <Snap><SnapBox type="checkbox" />Snapping</Snap>
        <SnapIcons>
          <Icon w={12} h={11}><path d="M1 11l4-4 4 4M5 7l4-5" strokeWidth="1.2" /><path d="M8 0h3v3H8z" {...F} /></Icon>
          <Icon w={11} h={11} color={c.blue}><path d="M.5 3V.5H3M8 .5h2.5V3M10.5 8v2.5H8M3 10.5H.5V8" /><path d="M3 3h2v2H3zM6.5 3h2v2h-2zM3 6.5h2v2H3zM6.5 6.5h2v2h-2z" {...F} /></Icon>
        </SnapIcons>
        <Workspaces>
          <Space $gap={34}>Default</Space>
          <Space $on $gap={9}>Standard</Space>
          <Space $gap={19} aria-label="Workspace menu"><MenuIcon color={c.blue} /></Space>
          <Space $gap={36}>Small Screen</Space>
          <Space $gap={31}>Libraries</Space>
          <Space $gap={12} aria-label="More workspaces"><More /></Space>
          <Icon w={14} h={9}><path d="M0 0h14v9H0z" {...F} /><circle cx="4" cy="4.5" r="2" stroke="#222" strokeWidth="1.4" /><path d="M8.5 3h4M8.5 6h4" stroke="#222" strokeWidth="1.4" /></Icon>
          <HelpSearch><Lens drop={false} /><input placeholder="Search Help" aria-label="Search Help" /></HelpSearch>
        </Workspaces>
      </Toolbar>
      <Body>
        <LeftArea>
          <UpperRow>
            <ProjectPanel />
            <CompositionPanel />
            <EffectsPanel />
          </UpperRow>
          <TimelinePanel />
        </LeftArea>
        <RightColumn />
      </Body>
      <Subtitles>
        <Chinese lang="zh">这里的大小和颜色 你需要做选择的文</Chinese>
        <Chinese lang="zh">本图层 然后进入字符面板 开始调整你的文本</Chinese>
        <English>size and color here all you have to do the selected text layer and go to the character panel and start adjusting your text.</English>
      </Subtitles>
    </App>
  );
}
